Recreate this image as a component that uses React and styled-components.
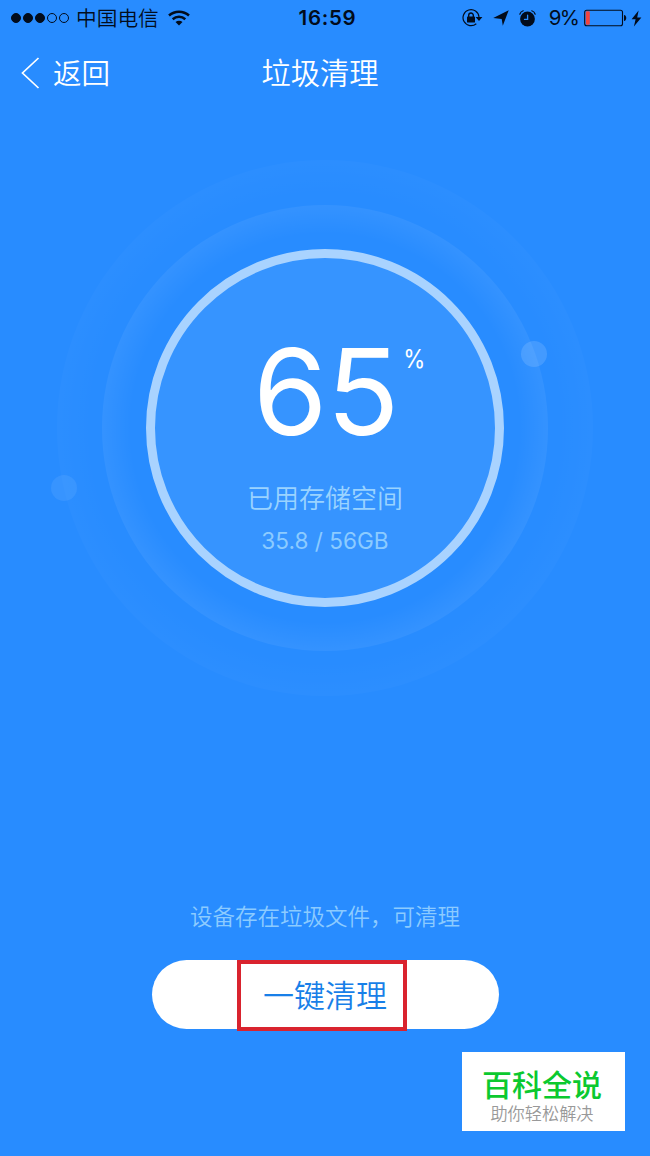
import React from 'react';
import styled, { createGlobalStyle } from 'styled-components';

const GlobalStyle = createGlobalStyle`
  * {
    box-sizing: border-box;
  }

  body {
    margin: 0;
    background: #288cff;
    font-family: Inter, 'Noto Sans CJK SC', sans-serif;
  }
`;

const Screen = styled.div`
  position: relative;
  display: flex;
  flex-direction: column;
  align-items: center;
  width: 650px;
  height: 1156px;
  overflow: hidden;
  background: #288cff;
`;

const StatusBar = styled.header`
  display: grid;
  grid-template-columns: 1fr auto 1fr;
  align-items: center;
  width: 100%;
  height: 36px;
  padding: 0 8px 0 11px;
  color: #020c1c;
`;

const StatusGroup = styled.div`
  display: flex;
  align-items: center;
  justify-content: ${props => (props.$end ? 'flex-end' : 'flex-start')};

  svg {
    display: block;
    flex: none;
  }
`;

const StatusIcon = styled.span`
  margin-left: ${props => props.$gap}px;
`;

const Signal = styled.div`
  display: flex;
  gap: 2px;
  margin-right: 7px;
`;

const Dot = styled.span`
  width: 10px;
  height: 10px;
  border: 1px solid #020c1c;
  border-radius: 50%;
  background: ${props => (props.$on ? '#020c1c' : 'transparent')};
`;

const Carrier = styled.span`
  margin: 2px 9px 0 0;
  font-size: 20.7px;
  font-weight: 350;
  line-height: 34px;
  white-space: nowrap;
`;

const Time = styled.span`
  margin-left: 2px;
  font-size: 20.5px;
  font-weight: 600;
  line-height: 36px;
  letter-spacing: 0.7px;
`;

const Percent = styled.span`
  margin: 0 6px 0 13px;
  font-size: 20.5px;
  line-height: 36px;
  letter-spacing: -1.8px;
`;

const NavBar = styled.nav`
  display: grid;
  grid-template-columns: 1fr auto 1fr;
  align-items: center;
  width: 100%;
  height: 74px;
  padding: 0 21px;
  color: #fff;
`;

const Back = styled.a`
  display: flex;
  align-items: center;
  gap: 13px;
  font-size: 28.5px;
  font-weight: 350;
  line-height: 40px;

  span {
    padding-top: 2px;
  }
`;

const Title = styled.h1`
  margin: 2px 10px 0 0;
  font-size: 29.3px;
  font-weight: 350;
  line-height: 40px;
`;

const Halo = styled.div`
  position: relative;
  display: flex;
  align-items: center;
  justify-content: center;
  flex: none;
  width: 536px;
  height: 536px;
  margin-top: 50px;
  border-radius: 50%;
  background: radial-gradient(circle closest-side, rgba(255, 255, 255, 0) 87%, rgba(255, 255, 255, 0.02) 100%);
`;

const InnerHalo = styled.div`
  display: flex;
  align-items: center;
  justify-content: center;
  width: 446px;
  height: 446px;
  border-radius: 50%;
  background: radial-gradient(circle closest-side, rgba(255, 255, 255, 0) 87%, rgba(255, 255, 255, 0.06) 100%);
`;

const Dial = styled.div`
  display: flex;
  flex-direction: column;
  align-items: center;
  width: 358px;
  height: 358px;
  padding-top: 79px;
  border: 9px solid #a9d3ff;
  border-radius: 50%;
  background: #3694ff;
`;

// small satellites floating on the halo edges
const Satellite = styled.span`
  position: absolute;
  left: ${props => props.$x}px;
  top: ${props => props.$y}px;
  width: 26px;
  height: 26px;
  border-radius: 50%;
  background: rgba(255, 255, 255, ${props => props.$alpha});
`;

const Usage = styled.div`
  display: flex;
  align-items: flex-start;
  height: 110px;
  color: #fff;
`;

const UsageValue = styled.span`
  margin-left: 30px;
  font-size: 120px;
  line-height: 110px;
  letter-spacing: -1px;
`;

const UsageUnit = styled.span`
  margin: 8px 0 0 4px;
  font-size: 25px;
  line-height: 28px;
  transform: scaleX(0.9);
`;

const Label = styled.p`
  margin: 36px 0 0;
  color: #9ad3ff;
  font-size: 26px;
  font-weight: 350;
  line-height: 32px;
`;

const Amount = styled.p`
  margin: 11px 0 0;
  color: #8ccbff;
  font-size: 22.6px;
  line-height: 30px;
`;

const Tip = styled.p`
  margin: 201px 0 0;
  color: #8ccbff;
  font-size: 22.5px;
  font-weight: 350;
  line-height: 40px;
`;

const CleanButton = styled.button`
  position: relative;
  width: 347px;
  height: 69px;
  margin-top: 23px;
  padding: 0;
  border: 0;
  border-radius: 35px;
  background: #fff;
  color: #187fe8;
  font-family: inherit;
  font-size: 31px;
  font-weight: 350;
  line-height: 71px;
`;

const Highlight = styled.span`
  position: absolute;
  left: 85px;
  top: 0;
  width: 170px;
  height: 71px;
  border: 4px solid #d9232e;
`;

const Badge = styled.aside`
  position: absolute;
  right: 25px;
  bottom: 25px;
  display: flex;
  flex-direction: column;
  align-items: center;
  width: 163px;
  height: 79px;
  padding-top: 15px;
  background: #fff;
`;

const BadgeTitle = styled.strong`
  margin-right: 3px;
  color: #0bc92f;
  font-size: 30px;
  font-weight: 500;
  line-height: 36px;
`;

const BadgeText = styled.span`
  margin-right: 3px;
  color: #999;
  font-size: 17.2px;
  font-weight: 350;
  line-height: 21px;
`;

function WifiIcon() {
  return (
    <svg width="22" height="16" viewBox="0 0 22 16" fill="none" stroke="#020c1c" strokeWidth="2.5">
      <path d="M1 5.5C6.7.4 15.3.4 21 5.5" />
      <path d="M4.7 9.2c3.6-3.2 9-3.2 12.6 0" />
      <path d="M7.5 12.1c2-1.8 5-1.8 7 0L11 15.6z" fill="#020c1c" stroke="none" />
    </svg>
  );
}

function RotationLockIcon() {
  return (
    <svg width="21" height="18" viewBox="0 0 21 18" fill="none" stroke="#020c1c">
      <path d="M14.3 14.7A8 8 0 1 1 17 8" strokeWidth="1.2" />
      <path d="M13.6 8h6.8L17 12z" fill="#020c1c" stroke="none" />
      <rect x="5" y="7.6" width="8" height="6" rx=".7" fill="#020c1c" stroke="none" />
      <path d="M6.7 8V6.3a2.3 2.3 0 0 1 4.6 0V8" strokeWidth="1.4" />
    </svg>
  );
}

function LocationIcon() {
  return (
    <svg width="16" height="16" viewBox="0 0 16 16" fill="#020c1c">
      <path d="M15.7.3L9.8 15.8 8.7 8.9.2 8z" />
    </svg>
  );
}

function AlarmIcon() {
  return (
    <svg width="17" height="17" viewBox="0 0 17 17" fill="none" stroke="#020c1c" strokeLinecap="round">
      <circle cx="8.5" cy="9" r="7.4" fill="#020c1c" stroke="none" />
      <path d="M.8 4.2C1.3 2.6 2.6 1.3 4.2.8M16.2 4.2C15.7 2.6 14.4 1.3 12.8.8" strokeWidth="1.2" />
      <path d="M8.6 5.2v4.2H5.5" stroke="#288cff" strokeWidth="1.3" />
    </svg>
  );
}

function BatteryIcon() {
  return (
    <svg width="43" height="18" viewBox="0 0 43 18" fill="none">
      <rect x=".7" y="1.2" width="37.8" height="15.6" rx="2" stroke="#020c1c" strokeWidth="1.1" />
      <rect x="1.8" y="2.3" width="4" height="13.4" rx="1" fill="#f4433e" />
      <path d="M40 6c3 .2 3 5.8 0 6z" fill="#020c1c" />
    </svg>
  );
}

function BoltIcon() {
  return (
    <svg width="11" height="17" viewBox="0 0 11 17" fill="#020c1c">
      <path d="M7.6.5L.6 9.2h4L2.9 16.4l7.5-9H6.2z" />
    </svg>
  );
}

function App() {
  return (
    <Screen>
      <GlobalStyle />
      <StatusBar>
        <StatusGroup>
          <Signal>
            {[1, 2, 3, 4, 5].map(n => (
              <Dot key={n} $on={n <= 3} />
            ))}
          </Signal>
          <Carrier>中国电信</Carrier>
          <WifiIcon />
        </StatusGroup>
        <Time>16:59</Time>
        <StatusGroup $end>
          <RotationLockIcon />
          <StatusIcon $gap={10}>
            <LocationIcon />
          </StatusIcon>
          <StatusIcon $gap={10}>
            <AlarmIcon />
          </StatusIcon>
          <Percent>9%</Percent>
          <BatteryIcon />
          <StatusIcon $gap={4}>
            <BoltIcon />
          </StatusIcon>
        </StatusGroup>
      </StatusBar>

      <NavBar>
        <Back>
          <svg width="19" height="32" viewBox="0 0 19 32" fill="none" stroke="#fff" strokeWidth="1.7">
            <path d="M17.5 1L1.5 16l16 15" />
          </svg>
          <span>返回</span>
        </Back>
        <Title>垃圾清理</Title>
      </NavBar>

      <Halo>
        <InnerHalo>
          <Dial>
            <Usage>
              <UsageValue>65</UsageValue>
              <UsageUnit>%</UsageUnit>
            </Usage>
            <Label>已用存储空间</Label>
            <Amount>35.8 / 56GB</Amount>
          </Dial>
        </InnerHalo>
        <Satellite $x={464} $y={181} $alpha={0.13} />
        <Satellite $x={-6} $y={315} $alpha={0.07} />
      </Halo>

      <Tip>设备存在垃圾文件，可清理</Tip>
      <CleanButton>
        一键清理
        <Highlight />
      </CleanButton>

      <Badge>
        <BadgeTitle>百科全说</BadgeTitle>
        <BadgeText>助你轻松解决</BadgeText>
      </Badge>
    </Screen>
  );
}

export default App;
